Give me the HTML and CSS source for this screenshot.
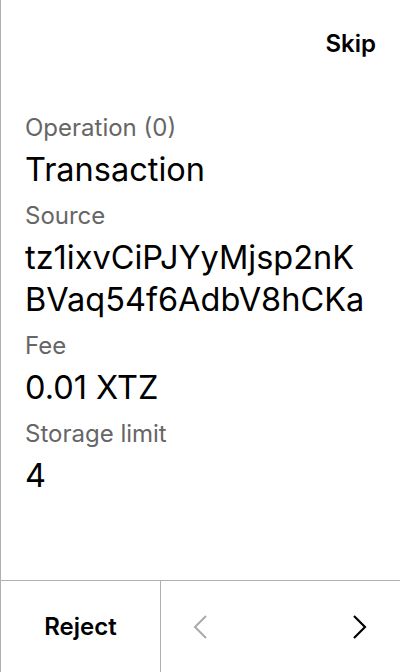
FILE: index.html
```html
<!DOCTYPE html>
<html>
<head>
<meta charset="utf-8">
<link rel="stylesheet" href="styles.css">
</head>
<body>
<div class="screen">
  <div class="top">
    <span class="skip">Skip</span>
  </div>
  <div class="content">
    <div class="label">Operation (0)</div>
    <div class="value">Transaction</div>
    <div class="label">Source</div>
    <div class="value">tz1ixvCiPJYyMjsp2nK<br>BVaq54f6AdbV8hCKa</div>
    <div class="label">Fee</div>
    <div class="value">0.01 XTZ</div>
    <div class="label">Storage limit</div>
    <div class="value">4</div>
  </div>
  <div class="bottom">
    <div class="reject">Reject</div>
    <div class="nav">
      <svg class="chev disabled" width="16" height="26" viewBox="0 0 16 26"><path d="M14 2 L3 13 L14 24" fill="none" stroke="currentColor" stroke-width="2"/></svg>
      <svg class="chev" width="16" height="26" viewBox="0 0 16 26"><path d="M2 2 L13 13 L2 24" fill="none" stroke="currentColor" stroke-width="2.2"/></svg>
    </div>
  </div>
</div>
</body>
</html>
```
FILE: styles.css
```css
* { box-sizing: border-box; }
html, body { margin: 0; padding: 0; }
body {
  font-family: Inter, "Noto Sans", sans-serif;
  color: #000;
  background: #fff;
}
.screen {
  width: 400px;
  height: 672px;
  border-left: 1px solid #b0b0b0;
  display: flex;
  flex-direction: column;
}
.top {
  display: flex;
  justify-content: flex-end;
  padding: 30px 24px 0 24px;
  height: 62px;
}
.skip {
  font-size: 24px;
  font-weight: 600;
  line-height: 28px;
}
.content {
  flex: 1;
  padding: 52px 24px 0 24px;
}
.label {
  font-size: 24px;
  line-height: 28px;
  color: #666;
  margin-top: 11px;
  margin-bottom: 7px;
}
.label:first-child { margin-top: 0; }
.value {
  font-size: 32.5px;
  line-height: 42px;
}
.bottom {
  height: 92px;
  border-top: 1px solid #b0b0b0;
  display: flex;
}
.reject {
  width: 160px;
  border-right: 1px solid #b0b0b0;
  display: flex;
  align-items: center;
  justify-content: center;
  font-size: 24px;
  font-weight: 600;
  padding-bottom: 1px;
}
.nav {
  flex: 1;
  display: flex;
  align-items: center;
  justify-content: space-between;
  padding: 0 32px 0 31px;
}
.chev { display: block; color: #000; }
.chev.disabled { color: #aaa; }
```
